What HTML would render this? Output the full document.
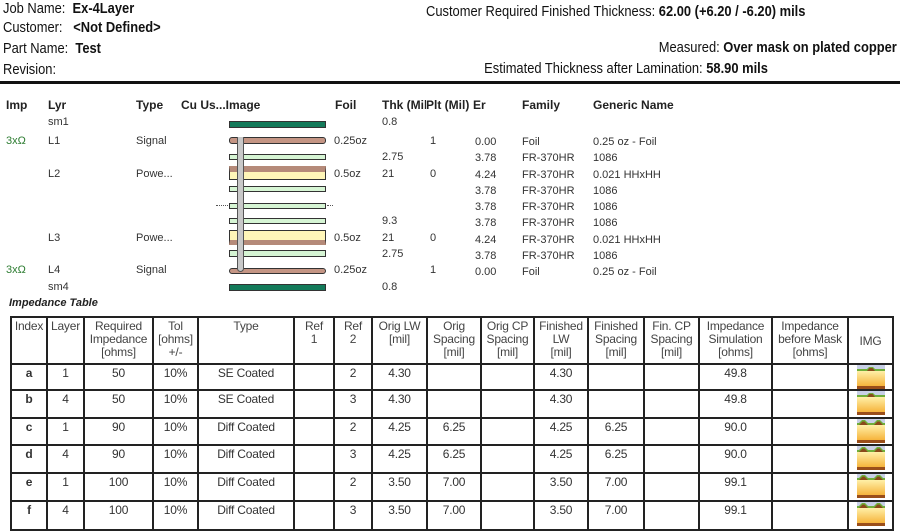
<!DOCTYPE html>
<html><head><meta charset="utf-8"><style>
*{margin:0;padding:0;box-sizing:border-box}
body{width:900px;height:532px;background:#fff;position:relative;overflow:hidden;font-family:"Liberation Sans",Arial,sans-serif;color:#222}
.a{position:absolute;white-space:nowrap}
.h{font-size:15px;transform:scaleX(.86);transform-origin:left top;color:#111}
.hr{font-size:15px;transform:scaleX(.86);transform-origin:right top;color:#111}
b{font-weight:bold}
.s{font-size:11px;color:#333}
.sh{font-size:12px;font-weight:bold;color:#222}
.bar{position:absolute;left:229px;width:97px;border:1px solid #333}
.cu{background:#c49584}
.gr{background:#d6f5d4}
.ye{background:#fff6b8}
.sm{background:#137a5a}
table{position:absolute;left:10px;top:316px;border-collapse:collapse;table-layout:fixed;font-size:12px;color:#333}
td{border:2px solid #222;text-align:center;vertical-align:top;padding-top:2px;line-height:13px;letter-spacing:-0.2px}
tr.hd td{height:47px;color:#444}
svg{display:block;margin:0 auto}
</style></head><body>
<div class="a h" style="left:3px;top:0">Job Name:&nbsp; <b>Ex-4Layer</b></div>
<div class="a h" style="left:3px;top:19px">Customer:&nbsp;&nbsp; <b>&lt;Not Defined&gt;</b></div>
<div class="a h" style="left:3px;top:40px">Part Name:&nbsp; <b>Test</b></div>
<div class="a h" style="left:3px;top:61px">Revision:</div>
<div class="a h" style="left:426px;top:3px">Customer Required Finished Thickness: <b>62.00 (+6.20 / -6.20) mils</b></div>
<div class="a hr" style="right:3px;top:39px">Measured: <b>Over mask on plated copper</b></div>
<div class="a hr" style="right:132px;top:60px">Estimated Thickness after Lamination: <b>58.90 mils</b></div>
<div class="a" style="left:0;top:81px;width:900px;height:3px;background:#111"></div>

<div class="a sh" style="left:6px;top:98px">Imp</div>
<div class="a sh" style="left:48px;top:98px">Lyr</div>
<div class="a sh" style="left:136px;top:98px">Type</div>
<div class="a sh" style="left:181px;top:98px">Cu Us...Image</div>
<div class="a sh" style="left:335px;top:98px">Foil</div>
<div class="a sh" style="left:382px;top:98px">Thk (Mil)</div>
<div class="a sh" style="left:426px;top:98px;background:#fff">Plt (Mil)</div>
<div class="a sh" style="left:473px;top:98px;background:#fff">Er</div>
<div class="a sh" style="left:522px;top:98px">Family</div>
<div class="a sh" style="left:593px;top:98px">Generic Name</div>

<div class="a s" style="left:48px;top:116px">sm1</div>
<div class="a s" style="left:382px;top:116px">0.8</div>
<div class="a s" style="left:6px;top:135px;color:#2e7d32">3xΩ</div>
<div class="a s" style="left:48px;top:135px">L1</div>
<div class="a s" style="left:136px;top:135px">Signal</div>
<div class="a s" style="left:334px;top:135px">0.25oz</div>
<div class="a s" style="left:430px;top:135px">1</div>
<div class="a s" style="left:382px;top:151px">2.75</div>
<div class="a s" style="left:48px;top:168px">L2</div>
<div class="a s" style="left:136px;top:168px">Powe...</div>
<div class="a s" style="left:334px;top:168px">0.5oz</div>
<div class="a s" style="left:382px;top:168px">21</div>
<div class="a s" style="left:430px;top:168px">0</div>
<div class="a s" style="left:382px;top:215px">9.3</div>
<div class="a s" style="left:48px;top:232px">L3</div>
<div class="a s" style="left:136px;top:232px">Powe...</div>
<div class="a s" style="left:334px;top:232px">0.5oz</div>
<div class="a s" style="left:382px;top:232px">21</div>
<div class="a s" style="left:430px;top:232px">0</div>
<div class="a s" style="left:382px;top:248px">2.75</div>
<div class="a s" style="left:6px;top:264px;color:#2e7d32">3xΩ</div>
<div class="a s" style="left:48px;top:264px">L4</div>
<div class="a s" style="left:136px;top:264px">Signal</div>
<div class="a s" style="left:334px;top:264px">0.25oz</div>
<div class="a s" style="left:430px;top:264px">1</div>
<div class="a s" style="left:48px;top:281px">sm4</div>
<div class="a s" style="left:382px;top:281px">0.8</div>

<div class="a s" style="left:475px;top:134px;line-height:16.25px">0.00<br>3.78<br>4.24<br>3.78<br>3.78<br>3.78<br>4.24<br>3.78<br>0.00</div>
<div class="a s" style="left:522px;top:134px;line-height:16.25px">Foil<br>FR-370HR<br>FR-370HR<br>FR-370HR<br>FR-370HR<br>FR-370HR<br>FR-370HR<br>FR-370HR<br>Foil</div>
<div class="a s" style="left:593px;top:134px;line-height:16.25px">0.25 oz - Foil<br>1086<br>0.021 HHxHH<br>1086<br>1086<br>1086<br>0.021 HHxHH<br>1086<br>0.25 oz - Foil</div>

<div class="bar sm" style="top:121px;height:7px"></div>
<div class="bar cu" style="top:137px;height:7px;border-radius:3px"></div>
<div class="bar gr" style="top:154px;height:6px"></div>
<div class="bar ye" style="top:166px;height:14px;border-top:6px solid #b58a79"></div>
<div class="bar gr" style="top:186px;height:6px"></div>
<div class="bar gr" style="top:203px;height:6px"></div>
<div class="a" style="left:216px;top:205px;width:12px;border-top:1px dotted #555"></div>
<div class="a" style="left:327px;top:205px;width:6px;border-top:1px dotted #555"></div>
<div class="bar gr" style="top:218px;height:6px"></div>
<div class="bar ye" style="top:230px;height:15px;border-bottom:5px solid #b58a79"></div>
<div class="bar gr" style="top:250px;height:7px"></div>
<div class="bar cu" style="top:268px;height:6px;border-radius:3px"></div>
<div class="bar sm" style="top:284px;height:7px"></div>
<div class="a" style="left:237px;top:137px;width:7px;height:135px;background:#c8c8c8;border:1px solid #555;border-top:none;border-radius:0 0 4px 4px"></div>

<div class="a" style="left:9px;top:297px;font-size:11px;font-weight:bold;font-style:italic;color:#222">Impedance Table</div>

<svg width="0" height="0" style="position:absolute"><defs>
<linearGradient id="g" x1="0" y1="0" x2="0" y2="1"><stop offset="0" stop-color="#fff0a8"/><stop offset="1" stop-color="#f6b43c"/></linearGradient>
<symbol id="se" viewBox="0 0 28 24"><rect width="28" height="5" fill="#c8cfe6"/><rect y="6" width="28" height="15" fill="url(#g)"/><rect y="4" width="28" height="2" fill="#6fae3a"/><path d="M9 5 L12 2 H16 L19 5Z" fill="#6fae3a"/><path d="M10 6 L12.5 3 H15.5 L18 6Z" fill="#8a4a1a"/><rect y="21" width="28" height="3" fill="#9a4e1a"/></symbol>
<symbol id="df" viewBox="0 0 28 24"><rect width="28" height="5" fill="#c8cfe6"/><rect y="6" width="28" height="15" fill="url(#g)"/><rect y="4" width="28" height="2" fill="#6fae3a"/><path d="M1 5 L5 1 H8 L12 5Z M16 5 L20 1 H23 L27 5Z" fill="#6fae3a"/><path d="M2 6 L5.5 2.5 H7.5 L11 6Z M17 6 L20.5 2.5 H22.5 L26 6Z" fill="#8a4a1a"/><rect y="21" width="28" height="3" fill="#9a4e1a"/></symbol>
</defs></svg>

<table>
<colgroup><col style="width:36px"><col style="width:37px"><col style="width:69px"><col style="width:45px"><col style="width:96px"><col style="width:40px"><col style="width:38px"><col style="width:55px"><col style="width:54px"><col style="width:53px"><col style="width:54px"><col style="width:56px"><col style="width:55px"><col style="width:73px"><col style="width:76px"><col style="width:45px"></colgroup>
<tr class="hd"><td>Index</td><td>Layer</td><td>Required<br>Impedance<br>[ohms]</td><td>Tol<br>[ohms]<br>+/-</td><td>Type</td><td>Ref<br>1</td><td>Ref<br>2</td><td>Orig LW<br>[mil]</td><td>Orig<br>Spacing<br>[mil]</td><td>Orig CP<br>Spacing<br>[mil]</td><td>Finished<br>LW<br>[mil]</td><td>Finished<br>Spacing<br>[mil]</td><td>Fin. CP<br>Spacing<br>[mil]</td><td>Impedance<br>Simulation<br>[ohms]</td><td>Impedance<br>before Mask<br>[ohms]</td><td style="vertical-align:middle">IMG</td></tr>
<tr style="height:26px"><td><b>a</b></td><td>1</td><td>50</td><td>10%</td><td>SE Coated</td><td></td><td>2</td><td>4.30</td><td></td><td></td><td>4.30</td><td></td><td></td><td>49.8</td><td></td><td style="padding-top:0"><svg width="28" height="24"><use href="#se"/></svg></td></tr>
<tr style="height:28px"><td><b>b</b></td><td>4</td><td>50</td><td>10%</td><td>SE Coated</td><td></td><td>3</td><td>4.30</td><td></td><td></td><td>4.30</td><td></td><td></td><td>49.8</td><td></td><td style="padding-top:0"><svg width="28" height="24"><use href="#se"/></svg></td></tr>
<tr style="height:27px"><td><b>c</b></td><td>1</td><td>90</td><td>10%</td><td>Diff Coated</td><td></td><td>2</td><td>4.25</td><td>6.25</td><td></td><td>4.25</td><td>6.25</td><td></td><td>90.0</td><td></td><td style="padding-top:0"><svg width="28" height="24"><use href="#df"/></svg></td></tr>
<tr style="height:28px"><td><b>d</b></td><td>4</td><td>90</td><td>10%</td><td>Diff Coated</td><td></td><td>3</td><td>4.25</td><td>6.25</td><td></td><td>4.25</td><td>6.25</td><td></td><td>90.0</td><td></td><td style="padding-top:0"><svg width="28" height="24"><use href="#df"/></svg></td></tr>
<tr style="height:28px"><td><b>e</b></td><td>1</td><td>100</td><td>10%</td><td>Diff Coated</td><td></td><td>2</td><td>3.50</td><td>7.00</td><td></td><td>3.50</td><td>7.00</td><td></td><td>99.1</td><td></td><td style="padding-top:0"><svg width="28" height="24"><use href="#df"/></svg></td></tr>
<tr style="height:29px"><td><b>f</b></td><td>4</td><td>100</td><td>10%</td><td>Diff Coated</td><td></td><td>3</td><td>3.50</td><td>7.00</td><td></td><td>3.50</td><td>7.00</td><td></td><td>99.1</td><td></td><td style="padding-top:0"><svg width="28" height="24"><use href="#df"/></svg></td></tr>
</table>
</body></html>
